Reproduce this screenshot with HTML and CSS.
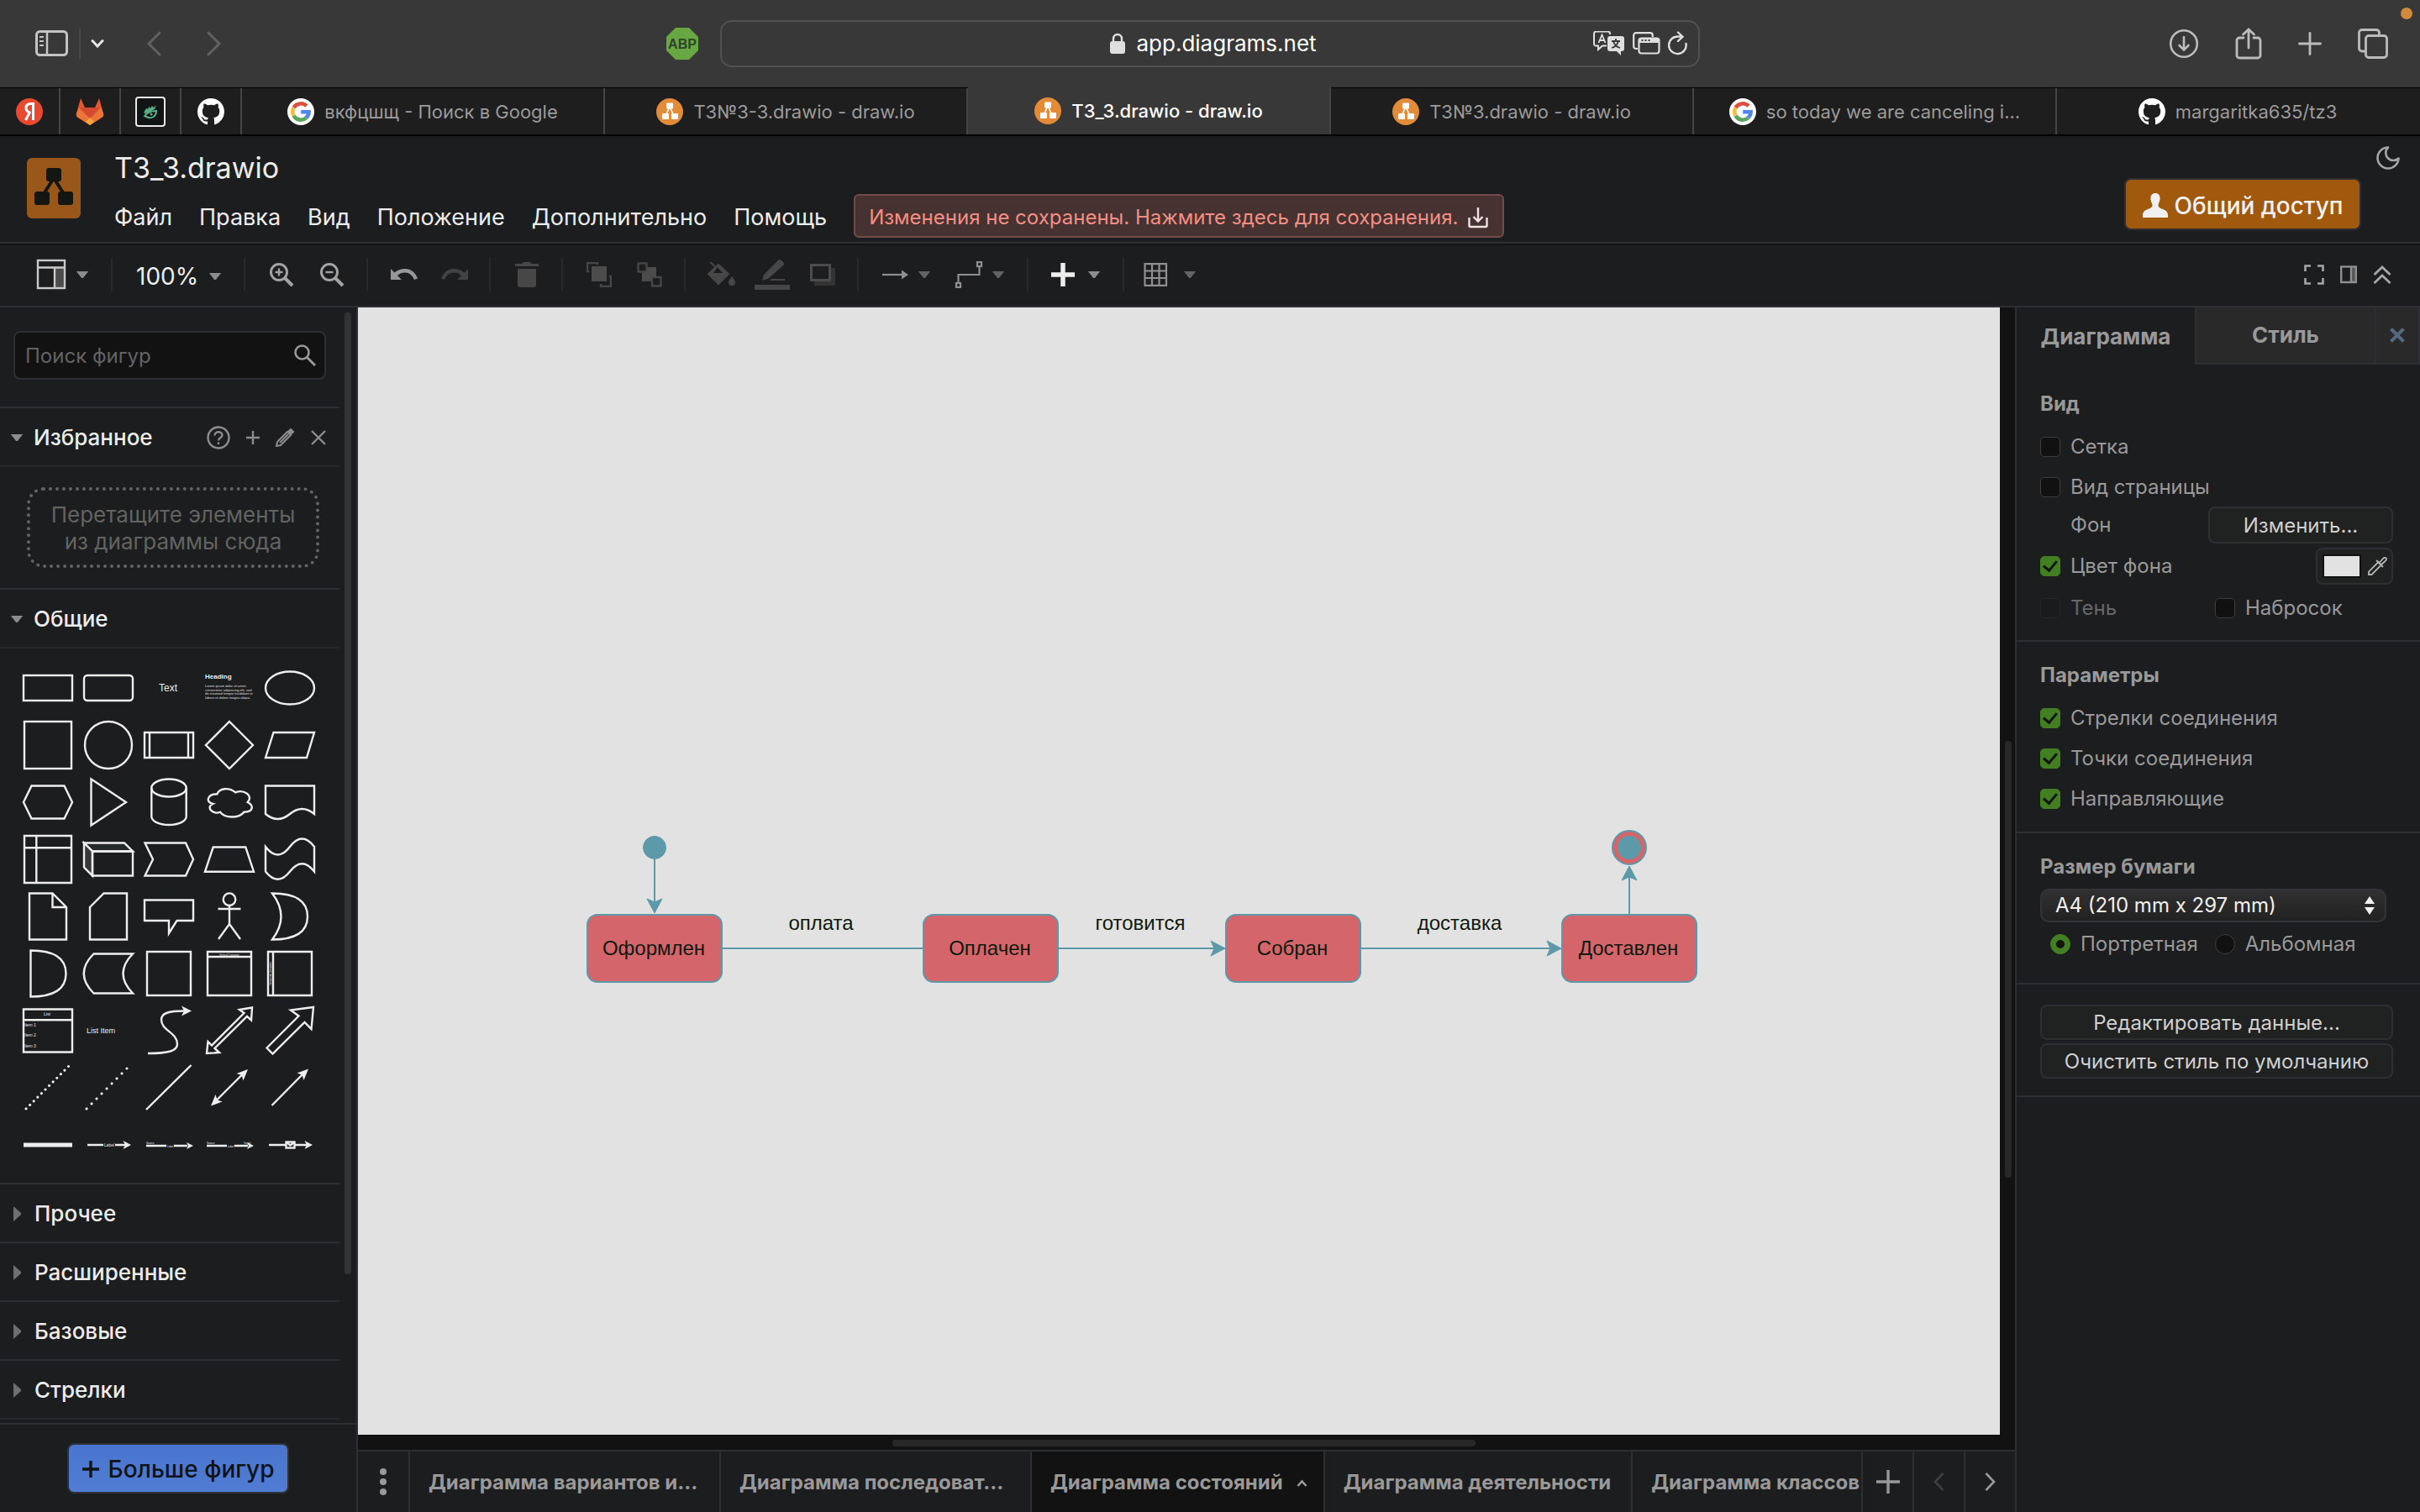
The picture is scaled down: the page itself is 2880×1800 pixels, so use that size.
FILE: index.html
```html
<!DOCTYPE html>
<html lang="ru">
<head>
<meta charset="utf-8">
<title>ТЗ_3.drawio - draw.io</title>
<link rel="stylesheet" href="styles.css">
</head>
<body>
<svg class="defs" aria-hidden="true">
  <defs>
    <symbol id="google" viewBox="0 0 32 32">
      <circle cx="16" cy="16" r="16" fill="#fff"/>
      <g fill="none" stroke-width="4.6">
        <path d="M7.6 11.2A9.7 9.7 0 0 1 22.9 9.2" stroke="#d9503f"/>
        <path d="M7.6 20.8A9.7 9.7 0 0 1 7.6 11.2" stroke="#f2bd42"/>
        <path d="M22.4 23.3A9.7 9.7 0 0 1 7.6 20.8" stroke="#58a55c"/>
        <path d="M16.2 16.3H25.6A9.7 9.7 0 0 1 22.4 23.3" stroke="#5186ec"/>
      </g>
    </symbol>
    <symbol id="drawio" viewBox="0 0 32 32">
      <circle cx="16" cy="16" r="16" fill="#e38b36"/>
      <path d="M16 10L11 21M16 10L21 21" stroke="#fff" stroke-width="1.6"/>
      <g fill="#fff"><rect x="12" y="5.500" width="8" height="7" rx="1"/><rect x="7" y="18" width="8" height="7" rx="1"/><rect x="18" y="18" width="8" height="7" rx="1"/></g>
    </symbol>
    <symbol id="github" viewBox="0 0 16 16">
      <path fill="#fff" d="M8 0C3.580 0 0 3.580 0 8c0 3.540 2.290 6.530 5.470 7.590.4.070.55-.17.55-.38 0-.19-.01-.82-.01-1.490-2.010.37-2.530-.49-2.690-.94-.09-.23-.48-.94-.82-1.130-.28-.15-.68-.52-.01-.53.63-.01 1.080.58 1.230.82.72 1.210 1.870.87 2.330.66.07-.52.28-.87.51-1.070-1.780-.2-3.640-.89-3.640-3.950 0-.87.31-1.590.82-2.150-.08-.2-.36-1.020.08-2.120 0 0 .67-.21 2.200.82.64-.18 1.320-.27 2-.27s1.360.09 2 .27c1.530-1.040 2.200-.82 2.200-.82.44 1.100.16 1.920.08 2.120.51.56.82 1.270.82 2.150 0 3.070-1.870 3.750-3.650 3.950.29.25.54.73.54 1.480 0 1.070-.01 1.930-.01 2.200 0 .21.15.46.55.38A8.010 8.010 0 0 0 16 8c0-4.420-3.580-8-8-8z"/>
    </symbol>
    <symbol id="caret" viewBox="0 0 16 10"><path d="M0 0H16L9 9H7Z" fill="currentColor"/></symbol>
    <symbol id="fold" viewBox="0 0 10 18"><path d="M0 0L9 8V10L0 18Z" fill="#6f6f70"/></symbol>
  </defs>
</svg>

<header class="browser">
  <div class="browser-left">
    <button class="bare" aria-label="Боковое меню"><svg width="40" height="32" viewBox="0 0 40 32" fill="none" stroke="#c4c4c4" stroke-width="3"><rect x="1.500" y="1.500" width="36" height="28" rx="4"/><path d="M14 2V29" stroke-width="2.500"/><path d="M5 8H10M5 13H10M5 18H10" stroke-width="2"/></svg></button>
    <span class="browser-rule"></span>
    <button class="bare" aria-label="Группы вкладок"><svg width="16" height="12" viewBox="0 0 16 12" fill="none" stroke="#e6e6e6" stroke-width="3" stroke-linecap="round"><path d="M2 2.500L8 9L14 2.500"/></svg></button>
    <button class="bare nav-back" aria-label="Назад"><svg width="18" height="30" viewBox="0 0 18 30" fill="none" stroke="#616161" stroke-width="3" stroke-linecap="round"><path d="M16 2L3 15L16 28"/></svg></button>
    <button class="bare nav-next" aria-label="Вперёд"><svg width="18" height="30" viewBox="0 0 18 30" fill="none" stroke="#616161" stroke-width="3" stroke-linecap="round"><path d="M2 2L15 15L2 28"/></svg></button>
    <svg class="abp" width="38" height="38" viewBox="0 0 38 38"><path d="M11 0H27L38 11V27L27 38H11L0 27V11Z" fill="#68a843"/><text x="19" y="25" text-anchor="middle" font-size="16" font-weight="700" fill="#33412b" font-family="Liberation Sans Narrow, Liberation Sans, sans-serif">ABP</text></svg>
  </div>
  <div class="address">
    <span class="address-text">
      <svg width="20" height="26" viewBox="0 0 20 26"><rect x="1" y="10" width="18" height="15" rx="3" fill="#dfdfdf"/><path d="M5 11V7a5 5 0 0 1 10 0v4" fill="none" stroke="#dfdfdf" stroke-width="2.400"/></svg>
      app.diagrams.net
    </span>
    <span class="address-tools">
      <svg width="38" height="30" viewBox="0 0 38 30"><path d="M20 4V3a2.500 2.500 0 0 0-2.500-2.500h-14A2.500 2.500 0 0 0 1 3v12a2.500 2.500 0 0 0 2.500 2.500H6V22l5-4.500h5" fill="none" stroke="#dfdfdf" stroke-width="2"/><path d="M6.500 14L10.500 4.500L14.500 14M8 11H13" fill="none" stroke="#dfdfdf" stroke-width="1.800"/><rect x="17" y="6" width="20" height="18" rx="3" fill="#dfdfdf"/><path d="M27 23L33 29V22Z" fill="#dfdfdf"/><path d="M22 12H32M27 9V12M30 12C29 16 26 19 22 20M24 12C25 16 28 19 32 20" stroke="#383838" stroke-width="1.800" fill="none"/></svg>
      <svg width="33" height="28" viewBox="0 0 33 28" fill="none" stroke="#dfdfdf" stroke-width="2.200"><path d="M6 20H4a2.800 2.800 0 0 1-2.800-2.800V4A2.800 2.800 0 0 1 4 1.200H21A2.800 2.800 0 0 1 23.800 4V6"/><rect x="7.500" y="7.500" width="24" height="18" rx="3"/><path d="M8 10H31" stroke-width="6"/><path d="M10.500 10h2M14.500 10h2M18.500 10h2" stroke="#383838"/></svg>
      <svg width="24" height="30" viewBox="0 0 24 30" fill="none" stroke="#dfdfdf" stroke-width="2.400" stroke-linecap="round"><path d="M21.500 15A10.300 10.300 0 1 1 12 6.500H17M12 1.500L17.500 6.700L12 12"/></svg>
    </span>
  </div>
  <div class="browser-right">
    <button class="bare" aria-label="Загрузки"><svg width="36" height="36" viewBox="0 0 36 36" fill="none" stroke="#bcbcbc" stroke-width="2.600" stroke-linecap="round"><circle cx="18" cy="18" r="15.800"/><path d="M18 10V25M12.500 20L18 25.500L23.500 20"/></svg></button>
    <button class="bare" aria-label="Поделиться"><svg width="32" height="38" viewBox="0 0 32 38" fill="none" stroke="#bcbcbc" stroke-width="2.800" stroke-linecap="round"><path d="M10 12H5a3 3 0 0 0-3 3V33a3 3 0 0 0 3 3H27a3 3 0 0 0 3-3V15a3 3 0 0 0-3-3H22M16 24V2.500M9.500 8L16 2L22.500 8"/></svg></button>
    <button class="bare" aria-label="Новая вкладка"><svg width="28" height="28" viewBox="0 0 28 28" stroke="#bcbcbc" stroke-width="2.800" stroke-linecap="round"><path d="M14 1.500V26.500M1.500 14H26.500"/></svg></button>
    <button class="bare" aria-label="Обзор вкладок"><svg width="36" height="36" viewBox="0 0 36 36" fill="none" stroke="#bcbcbc" stroke-width="2.800"><path d="M9 27H5a3.500 3.500 0 0 1-3.500-3.500V5A3.500 3.500 0 0 1 5 1.500H22A3.500 3.500 0 0 1 25.500 5V8"/><rect x="9.500" y="8.500" width="25" height="26" rx="3.500"/></svg></button>
  </div>
  <span class="mic-dot"></span>
</header>

<nav class="tabs" aria-label="Вкладки браузера">
  <a class="pin" href="#" aria-label="Яндекс"><svg width="32" height="32" viewBox="0 0 32 32"><circle cx="16" cy="16" r="16" fill="#e8492f"/><path d="M20.500 26V6.500H17.500C14 6.500 12 8.500 12 11.500C12 14.500 13.500 16.200 17.500 17.500M16.500 16.500L11.500 26" fill="none" stroke="#fff" stroke-width="3"/></svg></a>
  <a class="pin" href="#" aria-label="GitLab"><svg width="34" height="32" viewBox="0 0 34 32"><path d="M6 0L11 11H23L28 0L33 18Q34 21 31 23L17 32L3 23Q0 21 1 18Z" fill="#e2592f"/><path d="M11 11H23L30 11L17 25L4 11Z" fill="#d34a30"/><path d="M1 18L4 11L17 24L30 11L33 18Q34 21 31 23L17 32L3 23Q0 21 1 18Z" fill="#ec7438"/><path d="M17 23L22 28L17 32L12 28Z" fill="#f2a53c"/></svg></a>
  <a class="pin" href="#" aria-label="Закладка"><svg width="36" height="36" viewBox="0 0 36 36"><rect x="1" y="1" width="34" height="34" rx="3" fill="#101414" stroke="#e8e8e8" stroke-width="2"/><path d="M10 19L13 14L15 15L16 12L18 14L20 11L22 13L25 10L23 15L12 20Z" fill="#58b084"/><path d="M11 23C14 19 20 17 25 17C25 24 19 27 13 24Z" fill="none" stroke="#58b084" stroke-width="2"/><circle cx="19" cy="21" r="1.500" fill="#58b084"/></svg></a>
  <a class="pin" href="#" aria-label="GitHub"><svg width="32" height="32"><use href="#github"/></svg></a>
  <a class="tab" href="#"><svg width="32" height="32"><use href="#google"/></svg>вкфцшщ - Поиск в Google</a>
  <a class="tab" href="#"><svg width="32" height="32"><use href="#drawio"/></svg>ТЗ№3-3.drawio - draw.io</a>
  <a class="tab tab-current" href="#" aria-current="page"><svg width="32" height="32"><use href="#drawio"/></svg>ТЗ_3.drawio - draw.io</a>
  <a class="tab" href="#"><svg width="32" height="32"><use href="#drawio"/></svg>ТЗ№3.drawio - draw.io</a>
  <a class="tab" href="#"><svg width="32" height="32"><use href="#google"/></svg>so today we are canceling i...</a>
  <a class="tab" href="#"><svg width="32" height="32"><use href="#github"/></svg>margaritka635/tz3</a>
</nav>

<header class="app-head">
  <svg class="logo" width="64" height="72" viewBox="0 0 64 72"><rect width="64" height="72" rx="6" fill="#99581a"/><path d="M32 24L18 46M32 24L46 46" stroke="#141612" stroke-width="4"/><g fill="#141612"><rect x="23" y="12" width="18" height="16" rx="3"/><rect x="9" y="40" width="18" height="16" rx="3"/><rect x="37" y="40" width="18" height="16" rx="3"/></g></svg>
  <div class="head-main">
    <h1>ТЗ_3.drawio</h1>
    <div class="menubar">
      <a href="#">Файл</a><a href="#">Правка</a><a href="#">Вид</a><a href="#">Положение</a><a href="#">Дополнительно</a><a href="#">Помощь</a>
      <button class="unsaved">Изменения не сохранены. Нажмите здесь для сохранения.<svg width="24" height="26" viewBox="0 0 24 26" fill="none" stroke="#f0e4e2" stroke-width="2.400"><path d="M1.500 13V22.500A1.500 1.500 0 0 0 3 24H21A1.500 1.500 0 0 0 22.500 22.500V13M12 1V17M6.500 12L12 17.500L17.500 12"/></svg></button>
    </div>
  </div>
  <button class="share"><svg width="30" height="30" viewBox="0 0 30 30" fill="#f0f0f0"><path d="M15 0C19.500 0 21 3.500 20.500 7.500C20 11 18.500 12.500 18.500 14.500C18.500 17.500 22 18 26 20C29 21.500 30 23.500 30 27V29H0V27C0 23.500 1 21.500 4 20C8 18 11.500 17.500 11.500 14.500C11.500 12.500 10 11 9.500 7.500C9 3.500 10.500 0 15 0Z"/></svg>Общий доступ</button>
  <button class="bare moon" aria-label="Тема"><svg width="28" height="28" viewBox="0 0 28 28" fill="none" stroke="#a6a6a6" stroke-width="2.600" stroke-linejoin="round"><path d="M14 1.500A12.500 12.500 0 1 0 26.500 14.500A7.800 7.800 0 0 1 14 1.500Z"/></svg></button>
</header>

<div class="toolbar" role="toolbar">
  <button class="tool drop" aria-label="Вид"><svg width="44" height="38" viewBox="2 0 44 38" fill="none" stroke="#c9c9c9" stroke-width="2.400"><rect x="26" y="11" width="12" height="24" fill="#4c4c4c" stroke="none"/><rect x="6" y="2" width="32" height="33"/><path d="M6 10.500H38M26 11V35"/></svg><svg width="16" height="9" class="caret"><use href="#caret"/></svg></button>
  <span class="rule"></span>
  <button class="tool zoom-level">100%<svg width="16" height="9" class="caret"><use href="#caret"/></svg></button>
  <span class="rule"></span>
  <button class="tool" aria-label="Увеличить"><svg width="30" height="30" viewBox="0 0 30 30" fill="none" stroke="#a3a3a3" stroke-width="3"><circle cx="12" cy="12" r="9.500"/><path d="M19 19L28 28" stroke-width="4"/><path d="M12 7.500V16.500M7.500 12H16.500" stroke-width="2.400"/></svg></button>
  <button class="tool" aria-label="Уменьшить"><svg width="30" height="30" viewBox="0 0 30 30" fill="none" stroke="#a3a3a3" stroke-width="3"><circle cx="12" cy="12" r="9.500"/><path d="M19 19L28 28" stroke-width="4"/><path d="M7.500 12H16.500" stroke-width="2.400"/></svg></button>
  <span class="rule"></span>
  <button class="tool" aria-label="Отменить"><svg width="32" height="18" viewBox="0 0 32 18"><path d="M0 2L4.500 6.500C8 3.500 12 2 17 2C24 2 29 6 32 13.500L28 15C25.500 9.500 22 6.500 17 6.500C13.500 6.500 10.500 7.500 8 10L13 15H0Z" fill="#979797"/></svg></button>
  <button class="tool" aria-label="Повторить"><svg width="32" height="18" viewBox="0 0 32 18"><path transform="matrix(-1 0 0 1 32 0)" d="M0 2L4.500 6.500C8 3.500 12 2 17 2C24 2 29 6 32 13.500L28 15C25.500 9.500 22 6.500 17 6.500C13.500 6.500 10.500 7.500 8 10L13 15H0Z" fill="#414242"/></svg></button>
  <span class="rule"></span>
  <button class="tool" aria-label="Удалить"><svg width="28" height="30" viewBox="0 0 28 30" fill="#464746"><path d="M0 2H8L10 0H18L20 2H28V5H0ZM3 8H25V27A3 3 0 0 1 22 30H6A3 3 0 0 1 3 27Z"/></svg></button>
  <span class="rule"></span>
  <button class="tool" aria-label="На передний план"><svg width="30" height="30" viewBox="0 0 30 30"><rect x="6" y="5" width="18" height="18" fill="#4b4c4b"/><path d="M3 11H1V1H13V3M27 17H29V29H17V26" fill="none" stroke="#464746" stroke-width="2.400"/></svg></button>
  <button class="tool" aria-label="На задний план"><svg width="30" height="30" viewBox="0 0 30 30"><rect x="6" y="6" width="17" height="17" fill="#4b4c4b"/><g fill="#1c1d1f" stroke="#464746" stroke-width="2.400"><rect x="1.500" y="1.500" width="10" height="10"/><rect x="18" y="18" width="10.500" height="10.500"/></g></svg></button>
  <span class="rule"></span>
  <button class="tool" aria-label="Цвет заливки"><svg width="34" height="30" viewBox="0 0 34 30"><path d="M3 0L12 8M13 3L25 14L13 26L1 14Z" fill="#464746" stroke="#464746" stroke-width="2"/><path d="M12 6L18 13H7Z" fill="#1c1d1f"/><path d="M29 17C31 20 33 22 33 24A4 4 0 0 1 25 24C25 22 27 20 29 17Z" fill="#464746"/></svg></button>
  <button class="tool" aria-label="Цвет линии"><svg width="42" height="38" viewBox="0 0 42 38" fill="#464746"><path d="M9 26L11 19L28 2Q30 0 32 2L34 4Q36 6 34 8L16 24ZM20 24H36V26H18ZM0 31H42V37H0Z"/></svg></button>
  <button class="tool" aria-label="Тень"><svg width="30" height="26" viewBox="0 0 30 26"><rect x="5" y="5" width="25" height="21" rx="2" fill="#333433"/><rect x="1.500" y="1.500" width="22" height="18" fill="#1c1d1f" stroke="#4b4c4b" stroke-width="3"/></svg></button>
  <span class="rule"></span>
  <button class="tool drop" aria-label="Соединение"><svg width="44" height="12" viewBox="0 0 44 12"><path d="M7 6H32" stroke="#8f8f8f" stroke-width="2.200"/><path d="M30 0.500L38 6L30 11.500Z" fill="#8f8f8f"/></svg><svg width="16" height="9" class="caret dim"><use href="#caret"/></svg></button>
  <button class="tool drop" aria-label="Путевые точки"><svg width="44" height="32" viewBox="0 0 44 32" fill="none" stroke="#8f8f8f" stroke-width="2.200"><rect x="7" y="26" width="5" height="5"/><rect x="32" y="1" width="5" height="5"/><path d="M9.500 26V16H34.500V6"/></svg><svg width="16" height="9" class="caret dim"><use href="#caret"/></svg></button>
  <span class="rule"></span>
  <button class="tool drop" aria-label="Вставить"><svg width="44" height="28" viewBox="2 0 44 28" stroke="#ededed" stroke-width="5.500"><path d="M22 0V28M8 14H36"/></svg><svg width="16" height="9" class="caret"><use href="#caret"/></svg></button>
  <span class="rule"></span>
  <button class="tool drop" aria-label="Таблица"><svg width="44" height="28" viewBox="6 0 44 28" fill="none" stroke="#8f8f8f" stroke-width="2.200"><path d="M9.500 1.200H35V26.800H9.500ZM9.500 9.500H35M9.500 18H35M18 1V27M26.500 1V27"/></svg><svg width="16" height="9" class="caret dim"><use href="#caret"/></svg></button>
  <div class="tool-right">
    <button class="bare" aria-label="Во весь экран"><svg width="24" height="24" viewBox="0 0 24 24" fill="none" stroke="#a6a6a6" stroke-width="2.600"><path d="M1.500 8V1.500H8M16 1.500H22.500V8M22.500 16V22.500H16M8 22.500H1.500V16"/></svg></button>
    <button class="bare" aria-label="Панель формата"><svg width="20" height="22" viewBox="0 0 20 22" fill="none" stroke="#8f8f8f" stroke-width="2.400"><rect x="13" y="2" width="6" height="18" fill="#555" stroke="none"/><rect x="1.200" y="1.500" width="17.600" height="18.500"/><path d="M13 2V20"/></svg></button>
    <button class="bare" aria-label="Свернуть"><svg width="22" height="22" viewBox="0 0 22 22" fill="none" stroke="#a6a6a6" stroke-width="2.800"><path d="M1.500 11L11 2L20.500 11M1.500 21L11 12L20.500 21"/></svg></button>
  </div>
</div>

<main class="work">
  <aside class="shapes">
    <div class="shapes-scroll">
      <div class="shapes-list">
        <label class="search"><input type="search" placeholder="Поиск фигур" aria-label="Поиск фигур"><svg width="26" height="26" viewBox="0 0 26 26" fill="none" stroke="#9a9a9a" stroke-width="2.600"><circle cx="9.500" cy="9.500" r="8"/><path d="M15 15L25 25" stroke-width="3"/></svg></label>
        <section>
          <h2 class="fold open"><svg width="16" height="9" class="caret"><use href="#caret"/></svg>Избранное
            <span class="fold-tools">
              <button class="bare" aria-label="Справка"><svg width="28" height="28" viewBox="0 0 28 28" fill="none" stroke="#8d8d8d" stroke-width="2.400"><circle cx="14" cy="14" r="12.500"/><path d="M9.500 11.500C9.500 6 18.500 6 18.500 11C18.500 14 14 14 14 17.500M14 19.500V22"/></svg></button>
              <button class="bare" aria-label="Добавить"><svg width="18" height="18" viewBox="0 0 18 18" stroke="#8d8d8d" stroke-width="2.400"><path d="M9 1V17M1 9H17"/></svg></button>
              <button class="bare" aria-label="Изменить"><svg width="24" height="22" viewBox="0 0 24 22" fill="none" stroke="#8d8d8d" stroke-width="2"><path d="M1 21L2 16L14 4L18 8L6 20ZM5 17L15 7"/><path d="M15.500 3.500L18 1L21 4L18.500 6.500Z" fill="#8d8d8d"/></svg></button>
              <button class="bare" aria-label="Закрыть"><svg width="18" height="18" viewBox="0 0 18 18" stroke="#8d8d8d" stroke-width="2.400"><path d="M1 1L17 17M17 1L1 17"/></svg></button>
            </span>
          </h2>
          <div class="drop-zone">Перетащите элементы из диаграммы сюда</div>
        </section>
        <section>
          <h2 class="fold open"><svg width="16" height="9" class="caret"><use href="#caret"/></svg>Общие</h2>
          <div class="palette">
            <svg viewBox="-36 -34 72 68"><rect x="-29" y="-15" width="58" height="30"/></svg>
            <svg viewBox="-36 -34 72 68"><rect x="-29" y="-15" width="58" height="30" rx="4"/></svg>
            <svg viewBox="-36 -34 72 68"><text x="-12" y="4" font-size="12">Text</text></svg>
            <svg viewBox="-36 -34 72 68"><text x="-29" y="-11" font-size="8" font-weight="700">Heading</text><g font-size="4" opacity=".9"><text x="-29" y="-1">Lorem ipsum dolor sit amet,</text><text x="-29" y="4">consectetur adipisicing elit, sed</text><text x="-29" y="8">do eiusmod tempor incididunt ut</text><text x="-29" y="13">labore et dolore magna aliqua.</text></g></svg>
            <svg viewBox="-36 -34 72 68"><ellipse rx="29" ry="19.500"/></svg>

            <svg viewBox="-36 -34 72 68"><rect x="-28" y="-28" width="56" height="56"/></svg>
            <svg viewBox="-36 -34 72 68"><circle r="28"/></svg>
            <svg viewBox="-36 -34 72 68"><path d="M-29 -15H29V15H-29ZM-23 -15V15M23 -15V15"/></svg>
            <svg viewBox="-36 -34 72 68"><path d="M0 -28L28 0L0 28L-28 0Z"/></svg>
            <svg viewBox="-36 -34 72 68"><path d="M-29 15L-19.500 -15H29L20 15Z"/></svg>

            <svg viewBox="-36 -34 72 68"><path d="M-29 0L-19.500 -19.500H19.500L29 0L19.500 19.500H-19.500Z"/></svg>
            <svg viewBox="-36 -34 72 68"><path d="M-20.500 -27.500L21 0L-20.500 27.500Z"/></svg>
            <svg viewBox="-36 -34 72 68"><path d="M-20.700 -17V17A20.700 10 0 0 0 20.700 17V-17"/><ellipse cy="-17" rx="20.700" ry="10.500"/></svg>
            <svg viewBox="-36 -34 72 68"><path transform="translate(-29 -19.500)" d="M14.500 9.700C2.900 9.700 0 19.500 9.300 21.500C0 25.700 10.400 35 18 31.200C23.200 39 40.600 39 46.400 31.200C58 31.200 58 23.400 50.700 19.500C58 11.700 46.400 3.900 36.200 7.800C29 2 17.400 2 14.500 9.700Z"/></svg>
            <svg viewBox="-36 -34 72 68"><path d="M-29 -19.500H29V14Q14.500 2 0 14T-29 14Z"/></svg>

            <svg viewBox="-36 -34 72 68"><path d="M-28 -28H28V28H-28ZM-28 -13.700H28M-13.700 -28V28"/></svg>
            <svg viewBox="-36 -34 72 68"><path d="M-29 -19.500H19L29 -9.500H-19Z" fill="#262a2b"/><path d="M-29 -19.500L-19 -9.500V19.500L-29 9.500Z" fill="#363738"/><path d="M-19 -9.500H29V19.500H-19Z"/></svg>
            <svg viewBox="-36 -34 72 68"><path d="M-28.500 -19.500H20L29 0L20 19.500H-28.500L-19 0Z"/></svg>
            <svg viewBox="-36 -34 72 68"><path d="M-29 14.700L-19.300 -14.500H19.300L29 14.700Z"/></svg>
            <svg viewBox="-36 -34 72 68"><path d="M-29 -15Q-14.500 4 0 -15T29 -15V14.500Q14.500 -4 0 14.500T-29 14.500Z"/></svg>

            <svg viewBox="-36 -34 72 68"><path d="M-22 -27.500H5.500L22 -11V27.500H-22ZM5.500 -27.500V-11H22"/></svg>
            <svg viewBox="-36 -34 72 68"><path d="M-5.500 -27.500H22V27.500H-22V-11Z"/></svg>
            <svg viewBox="-36 -34 72 68"><path d="M-29 -19.500H29V5H9.500L0 20V5H-29Z"/></svg>
            <svg viewBox="-36 -34 72 68"><circle cy="-20.300" r="7.300"/><path d="M0 -13V9M-13.500 -9H13.500M-13 27L0 9L13 27"/></svg>
            <svg viewBox="-36 -34 72 68"><path d="M-21 -27.500Q21 -27.500 21 0T-21 27.500Q0 0 -21 -27.500Z"/></svg>

            <svg viewBox="-36 -34 72 68"><path d="M-20.500 -27.500Q21.500 -27.500 21.500 0T-20.500 27.500Z"/></svg>
            <svg viewBox="-36 -34 72 68"><path d="M-17.500 -23.500H29Q6 0 29 23.500H-17.500Q-41 0 -17.500 -23.500Z"/></svg>
            <svg viewBox="-36 -34 72 68"><rect x="-26" y="-26" width="52" height="52"/></svg>
            <svg viewBox="-36 -34 72 68"><path d="M-26 -26H26V26H-26ZM-26 -20H26"/><text x="0" y="-21" font-size="3" text-anchor="middle">Vertical Container</text></svg>
            <svg viewBox="-36 -34 72 68"><path d="M-26 -26H26V26H-26ZM-20 -26V26"/><text transform="rotate(-90)" x="0" y="-22" font-size="3" text-anchor="middle">Horizontal Container</text></svg>

            <svg viewBox="-36 -34 72 68"><path d="M-29 -25.500H29V25.500H-29ZM-29 -12.700H29"/><g font-size="5"><text x="-5" y="-18">List</text><text x="-28" y="-5">Item 1</text><text x="-28" y="7">Item 2</text><text x="-28" y="20">Item 3</text></g></svg>
            <svg viewBox="-36 -34 72 68"><text x="-26" y="3" font-size="9">List Item</text></svg>
            <svg viewBox="-36 -34 72 68"><path d="M-25 27C0 27 10 24 10 16C10 2 -9 0 -9 -13C-9 -21 0 -23.500 18 -23.500"/><path class="solid" d="M27 -23.500L15 -29.500L18 -23.500L15 -17.500Z"/></svg>
            <svg viewBox="-36 -34 72 68"><path d="M-27 27L-25.500 13L-21 17.500L17.500 -21L12 -25L27 -27.500L26 -12.500L21 -17L-17.500 21L-12 26Z"/></svg>
            <svg viewBox="-36 -34 72 68"><path d="M-27.500 20.500L10.500 -17.500L1 -24.500L28 -28L25.500 -2L17.500 -10L-20.500 27.500Z"/></svg>

            <svg viewBox="-36 -34 72 68"><path class="dots" d="M-26 25L24.500 -25.500" stroke-dasharray="0.100 6.390"/></svg>
            <svg viewBox="-36 -34 72 68"><path class="dots" d="M-26 25L22 -23" stroke-dasharray="0.100 8.380"/></svg>
            <svg viewBox="-36 -34 72 68"><path d="M-27 26L26.500 -27"/></svg>
            <svg viewBox="-36 -34 72 68"><path d="M-16 15.500L16 -16.500"/><path class="solid" d="M22 -22L8.500 -17L14.500 -15L16.500 -8.500ZM-22 21.500L-8.500 16.500L-14.500 14.500L-16.500 8Z"/></svg>
            <svg viewBox="-36 -34 72 68"><path d="M-21.500 21L16 -17"/><path class="solid" d="M22 -22.500L8.500 -17.500L14.500 -15.500L16.500 -9Z"/></svg>

            <svg viewBox="-36 -34 72 68"><path class="thick" d="M-29 0H29"/></svg>
            <svg viewBox="-36 -34 72 68"><path d="M-25 0H-6M8 0H20"/><path class="solid" d="M27 0L17.500 -5L20 0L17.500 5Z"/><text x="-5" y="2" font-size="5">Label</text></svg>
            <svg viewBox="-36 -34 72 68"><path d="M-27 1H-3M6 1H22"/><path class="solid" d="M29 1L21 -3L23 1L21 5Z"/><g font-size="3"><text x="-2" y="3">Label</text><text x="-27" y="-1">Source</text></g></svg>
            <svg viewBox="-36 -34 72 68"><path d="M-27 1H-3M6 1H22"/><path class="solid" d="M29 1L21 -3L23 1L21 5Z"/><g font-size="3"><text x="-2" y="3">Label</text><text x="-27" y="-1">Source</text><text x="17" y="-1">Target</text></g></svg>
            <svg viewBox="-36 -34 72 68"><path d="M-25 0H20"/><path class="solid" d="M27 0L17.500 -5L20 0L17.500 5Z"/><rect x="-4.500" y="-3.500" width="10" height="7" fill="#1c1d1f"/><path d="M-4 -3L0.500 0.500L5 -3"/></svg>
          </div>
        </section>
        <h2 class="fold"><svg width="10" height="18"><use href="#fold"/></svg>Прочее</h2>
        <h2 class="fold"><svg width="10" height="18"><use href="#fold"/></svg>Расширенные</h2>
        <h2 class="fold"><svg width="10" height="18"><use href="#fold"/></svg>Базовые</h2>
        <h2 class="fold last"><svg width="10" height="18"><use href="#fold"/></svg>Стрелки</h2>
      </div>
      <div class="scroll-track"><span class="thumb"></span></div>
    </div>
    <div class="shapes-foot"><button class="more"><svg width="20" height="20" viewBox="0 0 20 20" stroke="#101318" stroke-width="3.400"><path d="M10 0V20M0 10H20"/></svg>Больше фигур</button></div>
  </aside>

  <section class="editor">
    <div class="canvas-row">
      <div class="canvas">
        <svg class="diagram" width="1954" height="1342">
          <g stroke="#5d99a8" stroke-width="2" fill="none">
            <path d="M353 657V710M434 763H673M834 763H1022M1194 763H1421M1513 722V676"/>
            <g fill="#5d99a8" stroke-width="1">
              <circle cx="353" cy="643" r="13.500"/>
              <path d="M353 721L344 704L353 708L362 704ZM1032 763L1015 754L1019 763L1015 772ZM1432 763L1415 754L1419 763L1415 772ZM1513 665L1504 682L1513 678L1522 682Z"/>
            </g>
            <g fill="#d3656b">
              <circle cx="1513" cy="643" r="20"/>
              <rect x="273" y="723" width="160" height="80" rx="12"/>
              <rect x="673" y="723" width="160" height="80" rx="12"/>
              <rect x="1033" y="723" width="160" height="80" rx="12"/>
              <rect x="1433" y="723" width="160" height="80" rx="12"/>
            </g>
            <circle cx="1513" cy="643" r="14" fill="#5d99a8" stroke="none"/>
          </g>
          <g class="node-text" text-anchor="middle">
            <text x="352" y="771">Оформлен</text><text x="752" y="771">Оплачен</text><text x="1112" y="771">Собран</text><text x="1512" y="771">Доставлен</text>
            <text x="551" y="741">оплата</text><text x="931" y="741">готовится</text><text x="1311" y="741">доставка</text>
          </g>
        </svg>
      </div>
      <div class="v-track"><span class="v-thumb"></span></div>
    </div>
    <div class="h-track"><span class="h-thumb"></span></div>
    <nav class="pages" aria-label="Страницы">
      <button class="page-btn" aria-label="Список страниц"><svg width="8" height="32" viewBox="0 0 8 32" fill="#999"><circle cx="4" cy="4" r="4"/><circle cx="4" cy="16" r="4"/><circle cx="4" cy="28" r="4"/></svg></button>
      <div class="page-list">
        <a class="page long" href="#">Диаграмма вариантов и...</a>
        <a class="page long" href="#">Диаграмма последоват...</a>
        <a class="page current" href="#">Диаграмма состояний<svg width="13" height="9" viewBox="0 0 13 9" fill="none" stroke="#999" stroke-width="2.600"><path d="M1.500 8L6.500 2.500L11.500 8"/></svg></a>
        <a class="page" href="#">Диаграмма деятельности</a>
        <a class="page" href="#">Диаграмма классов</a>
      </div>
      <button class="page-btn" aria-label="Добавить страницу"><svg width="28" height="28" viewBox="0 0 28 28" stroke="#999" stroke-width="3.400"><path d="M14 0V28M0 14H28"/></svg></button>
      <button class="page-btn" aria-label="Назад"><svg width="13" height="22" viewBox="0 0 13 22" fill="none" stroke="#3d3e40" stroke-width="2.600"><path d="M11.500 1L2 11L11.500 21"/></svg></button>
      <button class="page-btn" aria-label="Вперёд"><svg width="13" height="22" viewBox="0 0 13 22" fill="none" stroke="#999" stroke-width="2.600"><path d="M1.500 1L11 11L1.500 21"/></svg></button>
    </nav>
  </section>

  <aside class="format">
    <div class="format-tabs">
      <button class="ftab active">Диаграмма</button>
      <button class="ftab">Стиль</button>
      <button class="ftab fclose" aria-label="Закрыть"><svg width="18" height="18" viewBox="0 0 18 18" stroke="#566880" stroke-width="4"><path d="M1.500 1.500L16.500 16.500M16.500 1.500L1.500 16.500"/></svg></button>
    </div>
    <section class="group">
      <h3>Вид</h3>
      <label class="row"><input type="checkbox">Сетка</label>
      <label class="row"><input type="checkbox">Вид страницы</label>
      <div class="row row-button"><span class="indent">Фон</span><button class="btn change">Изменить...</button></div>
      <div class="row row-color"><label><input type="checkbox" checked>Цвет фона</label>
        <button class="btn color" aria-label="Цвет фона"><span class="swatch"></span><svg width="24" height="24" viewBox="0 0 24 24" fill="none" stroke="#b4b4b4" stroke-width="1.800"><path d="M2 22V18.500L13.500 7L17 10.500L5.500 22ZM11 5L19 13M14.500 8L19 3Q21 1 22.500 2.500T21 6.500L16 11"/></svg></button></div>
      <div class="row row-pair"><label class="off"><input type="checkbox" disabled>Тень</label><label><input type="checkbox">Набросок</label></div>
    </section>
    <section class="group">
      <h3>Параметры</h3>
      <label class="row"><input type="checkbox" checked>Стрелки соединения</label>
      <label class="row"><input type="checkbox" checked>Точки соединения</label>
      <label class="row"><input type="checkbox" checked>Направляющие</label>
    </section>
    <section class="group group-paper">
      <h3 id="paper">Размер бумаги</h3>
      <div class="select"><select aria-labelledby="paper"><option>A4 (210 mm x 297 mm)</option></select><svg width="12" height="22" viewBox="0 0 12 22" fill="#f0f0f0"><path d="M6 0L12 9H0ZM6 22L0 13H12Z"/></svg></div>
      <div class="row radios"><label><input type="radio" name="orient" checked>Портретная</label><label><input type="radio" name="orient">Альбомная</label></div>
    </section>
    <section class="group group-actions">
      <button class="btn">Редактировать данные...</button>
      <button class="btn">Очистить стиль по умолчанию</button>
    </section>
  </aside>
</main>
</body>
</html>
```
FILE: styles.css
```css
:root {
  --bg: #1c1d1f;
  --line: #2e2f32;
  --dark: #121212;
  --text: #ececec;
  --muted: #999;
}
* { box-sizing: border-box; }
body {
  margin: 0;
  min-height: 100vh;
  display: flex;
  flex-direction: column;
  background: var(--bg);
  color: var(--text);
  font: 24px/32px Inter, "Liberation Sans", sans-serif;
}
a { color: inherit; text-decoration: none; }
button { font: inherit; color: inherit; margin: 0; padding: 0; border: 0; background: none; }
h1, h2, h3 { margin: 0; }
svg { display: block; flex: none; }
.defs { position: absolute; width: 0; height: 0; }
.bare { display: flex; }

/* browser chrome */
.browser {
  position: relative;
  display: grid;
  grid-template-columns: 1fr minmax(0, 1166px) 1fr;
  align-items: center;
  height: 104px;
  background: #383838;
}
.browser-left { display: flex; align-items: center; padding: 0 26px 0 42px; }
.browser-rule { width: 2px; height: 36px; margin: 0 12px; background: #484848; }
.nav-back { margin-left: 50px; }
.nav-next { margin-left: 54px; }
.abp { margin-left: auto; }
.address {
  display: flex;
  align-items: center;
  height: 56px;
  padding: 0 12px 0 132px;
  border: 2px solid #515151;
  border-radius: 14px;
}
.address-text { flex: 1; display: flex; align-items: center; justify-content: center; gap: 12px; color: #fff; font-size: 26px; }
.address-tools { display: flex; align-items: center; gap: 9px; }
.browser-right { display: flex; align-items: center; justify-content: flex-end; gap: 43px; padding-right: 38px; }
.mic-dot { position: absolute; top: 9px; right: 9px; width: 14px; height: 14px; border-radius: 50%; background: #cf8b3b; }

.tabs { display: flex; height: 58px; border-top: 1px solid #000; border-bottom: 2px solid #000; background: #1e1e1e; }
.pin, .tab { display: flex; align-items: center; justify-content: center; border-right: 2px solid #454545; }
.pin { width: 72px; }
.tab { flex: 1 0 0; min-width: 0; gap: 12px; font-size: 22px; color: #9b9b9b; white-space: nowrap; }
.tab:last-child { border-right-color: transparent; }
.tab-current { background: #383838; color: #fff; font-weight: 500; margin-top: -1px; }

/* application header */
.app-head { display: flex; align-items: flex-start; height: 128px; padding: 18px 24px 0 32px; border-bottom: 2px solid var(--line); background: var(--bg); }
.logo { margin-top: 8px; }
.head-main { margin-left: 40px; }
h1 { font-size: 34px; font-weight: 400; line-height: 40px; }
.menubar { display: flex; align-items: center; gap: 32px; height: 52px; margin-top: 11px; font-size: 27px; white-space: nowrap; }
.menubar a { padding-top: 3px; }
.unsaved { display: flex; align-items: center; gap: 12px; height: 52px; padding: 3px 17px 0 16px; border: 2px solid #764a4b; border-radius: 6px; background: #463231; color: #f58f85; font-size: 24px; }
.share { display: flex; align-items: center; justify-content: center; gap: 8px; width: 282px; height: 62px; margin: 32px 18px 0 auto; padding-top: 4px; border: 2px solid #2e2f32; border-radius: 8px; background: #a1590d; color: #f2f2f2; font-size: 28px; font-weight: 500; }
.moon { margin-top: -6px; }

/* toolbar */
.toolbar { display: flex; align-items: center; height: 76px; padding: 0 34px 2px 32px; border-top: 2px solid #141414; border-bottom: 2px solid var(--line); }
.tool { display: flex; align-items: center; justify-content: center; width: 60px; height: 60px; padding-left: 2px; }
.tool.drop { width: 88px; justify-content: flex-start; gap: 5px; padding-left: 9px; }
.tool.zoom-level { width: 132px; justify-content: space-between; padding: 4px 14px 0 16px; font-size: 28px; }
.rule { width: 2px; height: 40px; margin: 0 12px; background: #28292b; }
.caret { color: #8c8c8c; }
.caret.dim { color: #626362; }
.tool-right { display: flex; align-items: center; gap: 19px; margin-left: auto; }

/* shape library */
.work { flex: 1; display: flex; min-height: 0; }
.shapes { display: flex; flex-direction: column; width: 426px; border-right: 2px solid var(--line); }
.shapes-scroll { flex: 1; display: flex; }
.shapes-list { width: 404px; }
.search { display: flex; align-items: center; height: 58px; margin: 28px 16px 32px; padding: 0 10px 0 12px; border: 2px solid var(--line); border-radius: 8px; background: var(--dark); }
.search input { flex: 1; min-width: 0; padding: 2px 0 0; border: 0; outline: 0; background: none; color: var(--text); font: inherit; }
.search input::placeholder { color: #636363; }
.fold { display: flex; align-items: center; gap: 15px; height: 70px; padding: 2px 16px 0 16px; border-top: 2px solid var(--line); font-size: 26px; font-weight: 500; }
.fold.open { height: 72px; padding-left: 12px; gap: 12px; border-bottom: 2px solid #27282a; }
.fold.last { height: 72px; margin-bottom: 4px; border-bottom: 2px solid #27282a; }
.fold-tools { display: flex; align-items: center; gap: 18px; margin-left: auto; }
.drop-zone { width: 348px; margin: 24px 0 24px 32px; padding: 13px 16px 11px; border: 4px dotted #646464; border-radius: 20px; color: #636460; font-size: 26px; text-align: center; }
.palette { display: grid; grid-template-columns: repeat(5, 72px); grid-auto-rows: 68px; padding: 13px 0 11px 21px; }
.palette svg { width: 72px; height: 68px; fill: none; stroke: #eee; stroke-width: 2.4px; }
.palette text { fill: #eee; stroke: none; font-family: "Liberation Sans", Arial, sans-serif; }
.palette .solid { fill: #eee; stroke: none; }
.palette .dots { stroke-width: 3px; stroke-linecap: round; }
.palette .thick { stroke-width: 5px; }
.scroll-track { width: 20px; padding: 6px; }
.thumb { display: block; width: 8px; height: 87%; border-radius: 4px; background: #323335; }
.shapes-foot { display: flex; align-items: center; justify-content: center; height: 106px; border-top: 2px solid var(--line); }
.more { display: flex; align-items: center; justify-content: center; gap: 11px; width: 264px; height: 60px; padding-top: 2px; border: 2px solid #2f3238; border-radius: 8px; background: linear-gradient(#4975cf, #507dd2); color: #101318; font-size: 28px; font-weight: 500; }

/* drawing area */
.editor { flex: 1; min-width: 0; display: flex; flex-direction: column; background: var(--dark); }
.canvas-row { flex: 1; display: flex; }
.canvas { position: relative; flex: 1; overflow: hidden; background: #e2e2e2; }
.diagram { position: absolute; left: 0; top: 0; }
.node-text { fill: #10190e; font: 24px "Liberation Sans", Arial, sans-serif; }
.v-track { width: 18px; padding: 516px 4px 0 6px; }
.v-thumb { display: block; width: 8px; height: 520px; border-radius: 4px; background: #282828; }
.h-track { height: 18px; padding: 6px 0 0 calc(50% - 350px); }
.h-thumb { display: block; width: 694px; height: 8px; border-radius: 4px; background: #282828; }
.pages { display: flex; height: 74px; border-top: 2px solid var(--line); background: var(--bg); color: var(--muted); }
.page-list { flex: 1; display: flex; min-width: 0; overflow: hidden; }
.page { flex: none; display: flex; align-items: center; gap: 16px; padding: 2px 24px 0 22px; border-left: 2px solid var(--line); font-weight: 700; white-space: nowrap; }
.page.long { width: 370px; }
.page.current { padding-right: 19px; background: var(--dark); }
.page-btn { display: flex; align-items: center; justify-content: center; width: 61px; border-left: 2px solid var(--line); }
.page-btn:first-child { width: 60px; border-left: 0; }

/* format panel */
.format { width: 482px; border-left: 2px solid var(--line); color: var(--muted); }
.format-tabs { display: flex; height: 68px; margin-bottom: 7px; }
.ftab { flex: 1; border: 0 solid var(--line); border-width: 0 0 2px 2px; background: #292929; font-size: 26px; font-weight: 700; }
.ftab.active { border: 0; background: none; padding-top: 2px; }
.fclose { flex: 0 0 54px; display: flex; align-items: center; justify-content: center; border-right-width: 2px; }
.group { padding: 24px 32px 16px 28px; border-bottom: 2px solid var(--line); }
h3 { margin-bottom: 10px; font-size: 24px; font-weight: 700; }
.row, .row label { display: flex; align-items: center; }
.row { height: 48px; padding-top: 2px; }
.row-button { height: 44px; padding-top: 0; justify-content: space-between; }
.row-color { height: 52px; justify-content: space-between; }
.row-pair { height: 47px; }
.row-pair label { width: 208px; }
.indent { padding-left: 36px; }
.off { opacity: .6; }
input[type="checkbox"], input[type="radio"] {
  appearance: none;
  display: grid;
  place-items: center;
  width: 24px;
  height: 24px;
  margin: 0 12px 0 0;
  border: 1px solid #3e3e3e;
  border-radius: 5px;
  background: #111;
}
input:disabled { border-color: #2c2d2e; background: #1a1a1b; }
input[type="radio"] { border-radius: 50%; }
input:checked { border-color: #417f22; background: #417f22; }
input[type="checkbox"]:checked::after {
  content: "";
  width: 7px;
  height: 13px;
  margin-bottom: 4px;
  border: solid #10150d;
  border-width: 0 3px 3px 0;
  transform: rotate(40deg);
}
input[type="radio"]:checked::after { content: ""; width: 10px; height: 10px; border-radius: 50%; background: #10150d; }
.btn { display: flex; align-items: center; justify-content: center; height: 42px; padding-top: 2px; border: 2px solid var(--line); border-radius: 8px; background: #202121; color: #cfcfcf; }
.change { width: 220px; height: 44px; }
.color { gap: 7px; width: 92px; height: 44px; padding: 0; }
.swatch { width: 46px; height: 28px; border: 2px solid #111; background: #e2e2e2; }
.group-paper { padding-bottom: 20px; }
.select { position: relative; margin-right: 8px; }
.select select { appearance: none; width: 100%; height: 40px; padding: 0 16px; border: 2px solid #333437; border-radius: 10px; background: linear-gradient(#303030, #222); color: #f0f0f0; font: inherit; }
.select svg { position: absolute; right: 14px; top: 9px; }
.radios { height: 52px; gap: 20px; padding-left: 12px; padding-top: 0; }
.group-actions { display: grid; gap: 4px; padding: 24px 32px 20px 28px; }
```
